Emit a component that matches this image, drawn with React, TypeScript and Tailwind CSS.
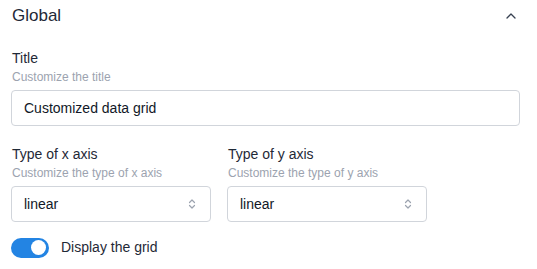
import React, { useState } from "react";

function Chevrons() {
  return (
    <svg width="8" height="12" viewBox="0 0 8 12" fill="none" stroke="#9ca3af" strokeWidth={1.2} strokeLinecap="round" strokeLinejoin="round">
      <path d="M1.5 4.5 4 2l2.5 2.5" />
      <path d="M1.5 7.5 4 10l2.5-2.5" />
    </svg>
  );
}

function SelectField({ label, hint, value }: { label: string; hint: string; value: string }) {
  return (
    <div className="flex flex-col w-[200px]">
      <div className="pl-[1px] text-[14px] leading-[16px] text-[#1f2937]">{label}</div>
      <div className="mt-[4px] pl-[1px] text-[12px] leading-[14px] text-[#9ca3af]">{hint}</div>
      <div className="mt-[6px] h-[36px] flex items-center justify-between pl-[12px] pr-[14px] border border-[#d1d5db] rounded-[4px] bg-white">
        <span className="text-[14px] text-[#111827]">{value}</span>
        <Chevrons />
      </div>
    </div>
  );
}

export default function App() {
  const [on, setOn] = useState(true);
  return (
    <div className="w-[537px] h-[269px] bg-white px-[11px] pt-[4px] font-['Liberation_Sans',Arial,sans-serif] overflow-hidden">
      {/* Header */}
      <div className="flex items-center justify-between h-[24px] pl-[1px]">
        <span className="text-[17px] text-[#1f2937]">Global</span>
        <svg className="mr-[10px]" width="10" height="6" viewBox="0 0 10 6" fill="none" stroke="#374151" strokeWidth={1.3} strokeLinecap="round" strokeLinejoin="round">
          <path d="M1 5 5 1l4 4" />
        </svg>
      </div>

      {/* Title */}
      <div className="mt-[22px] pl-[1px] text-[14px] leading-[16px] text-[#1f2937]">Title</div>
      <div className="mt-[4px] pl-[1px] text-[12px] leading-[14px] text-[#9ca3af]">Customize the title</div>
      <div className="mt-[6px] w-[509px] h-[36px] flex items-center pl-[12px] border border-[#d1d5db] rounded-[4px]">
        <span className="text-[14px] text-[#111827]">Customized data grid</span>
      </div>

      {/* Axis selects */}
      <div className="mt-[20px] flex gap-[16px]">
        <SelectField label="Type of x axis" hint="Customize the type of x axis" value="linear" />
        <SelectField label="Type of y axis" hint="Customize the type of y axis" value="linear" />
      </div>

      {/* Toggle */}
      <div className="mt-[15px] flex items-center gap-[12px]">
        <button
          onClick={() => setOn(!on)}
          className={`w-[38px] h-[20px] rounded-full flex items-center px-[3px] ${on ? "bg-[#2384e3] justify-end" : "bg-[#d1d5db] justify-start"}`}
        >
          <span className="w-[15px] h-[15px] rounded-full bg-white" />
        </button>
        <span className="text-[14px] text-[#1f2937]">Display the grid</span>
      </div>
    </div>
  );
}
